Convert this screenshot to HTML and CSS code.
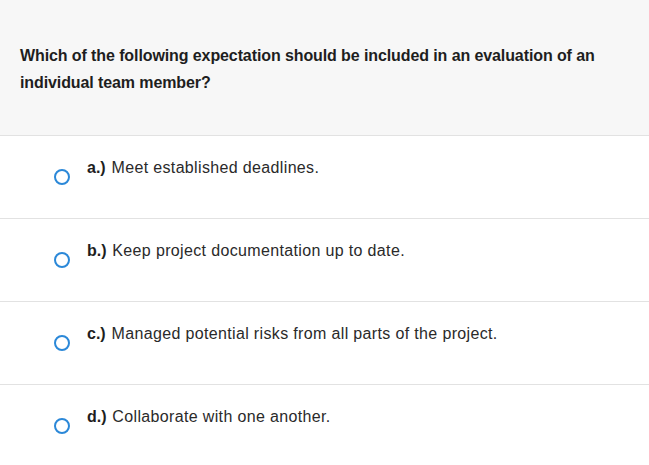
FILE: index.html
```html
<!DOCTYPE html>
<html>
<head>
<meta charset="utf-8">
<link rel="stylesheet" href="styles.css">
</head>
<body>
<div class="quiz">
  <div class="question">
    <p>Which of the following expectation should be included in an evaluation of an individual team member?</p>
  </div>
  <ul class="options">
    <li class="option"><span class="radio"></span><span class="label"><b>a.)</b> Meet established deadlines.</span></li>
    <li class="option"><span class="radio"></span><span class="label"><b>b.)</b> Keep project documentation up to date.</span></li>
    <li class="option"><span class="radio"></span><span class="label"><b>c.)</b> Managed potential risks from all parts of the project.</span></li>
    <li class="option"><span class="radio"></span><span class="label"><b>d.)</b> Collaborate with one another.</span></li>
  </ul>
</div>
</body>
</html>
```

FILE: styles.css
```css
html, body {
  margin: 0;
  padding: 0;
  background: #ffffff;
}
body {
  font-family: "Liberation Sans", Arial, sans-serif;
  color: #222;
}
.question {
  background: #f7f7f7;
  border-bottom: 1px solid #e2e2e2;
  height: 136px;
  box-sizing: border-box;
  padding: 42px 40px 0 20px;
}
.question p {
  margin: 0;
  font-size: 16px;
  font-weight: 700;
  line-height: 27px;
  color: #1e1e1e;
  letter-spacing: -0.1px;
}
.options {
  list-style: none;
  margin: 0;
  padding: 0;
}
.option {
  display: flex;
  align-items: flex-start;
  height: 83px;
  box-sizing: border-box;
  border-bottom: 1px solid #e2e2e2;
  padding: 22px 0 0 54px;
}
.radio {
  width: 16px;
  height: 16px;
  box-sizing: border-box;
  border: 2px solid #2b88d8;
  border-radius: 50%;
  margin-top: 11px;
  margin-right: 17px;
  flex: none;
}
.label {
  font-size: 16px;
  line-height: 20px;
  color: #2a2a2a;
  letter-spacing: 0.35px;
}
.label b {
  font-weight: 700;
  color: #1e1e1e;
  letter-spacing: 0;
  margin-right: 1px;
}
```
